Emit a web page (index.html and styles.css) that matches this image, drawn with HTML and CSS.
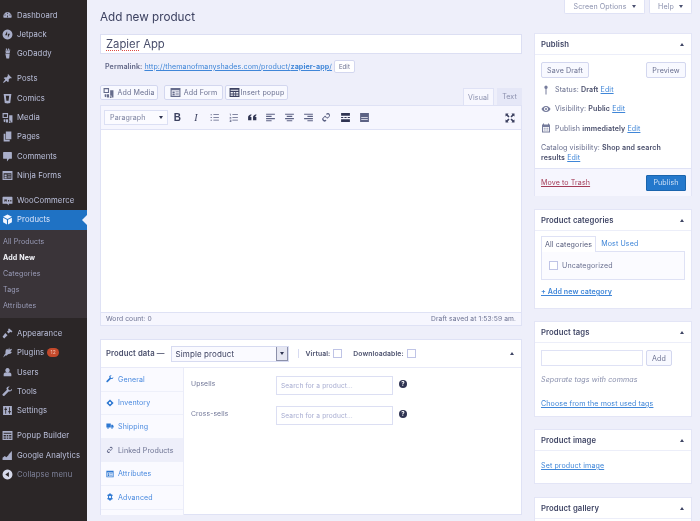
FILE: index.html
```html
<!DOCTYPE html>
<html lang="en">
<head>
<meta charset="utf-8">
<title>Add new product</title>
<link rel="stylesheet" href="styles.css">
</head>
<body>
<svg class="sprite" width="0" height="0">
  <defs>
    <symbol id="i-dash" viewBox="0 0 20 20"><path d="M3 14a7.500 7.500 0 1 1 14 0zM10 5a1 1 0 1 0 .01 0zM5.500 8a1 1 0 1 0 .01 0zM14.500 8a1 1 0 1 0 .01 0zM9 13l1-5 1 5z" fill-rule="evenodd"/></symbol>
    <symbol id="i-jet" viewBox="0 0 20 20"><path d="M10 1a9 9 0 1 0 .01 0zM9.300 4v7.500H5.500zM10.700 16V8.500h3.800z" fill-rule="evenodd"/></symbol>
    <symbol id="i-go" viewBox="0 0 20 20"><path d="M5 1l2 5h1L7 1h2l1 5 1-5h2l-1 5h1l1-4 1 1-1 6H7zM6 10h8l-1 9H8z"/></symbol>
    <symbol id="i-pin" viewBox="0 0 20 20"><path d="M11 2l7 7-2 1-1-1-3 3c1 2 0 4-1 5l-3-3-5 4-1-1 4-5-3-3c1-1 3-2 5-1l3-3-1-1z"/></symbol>
    <symbol id="i-comics" viewBox="0 0 20 20"><path d="M3 2h14l-2 16-5 1-5-1zM7 5l1 9h4l1-9z" fill-rule="evenodd"/></symbol>
    <symbol id="i-media" viewBox="0 0 20 20"><path d="M1 2h10v9H1zM3 4v5h6V4zM13 6h6v13h-3v-3h-3zM14 17a1.500 1.500 0 1 0 .01 0zM7 13h4v6H7zM3 13h3v4a1.500 1.500 0 0 1-3 0z" fill-rule="evenodd"/></symbol>
    <symbol id="i-pages" viewBox="0 0 20 20"><path d="M7 1h10v14H7zM3 5h3v11h8v3H3z"/></symbol>
    <symbol id="i-comment" viewBox="0 0 20 20"><path d="M3 2h14a1 1 0 0 1 1 1v10a1 1 0 0 1-1 1h-4l-4 5v-5H3a1 1 0 0 1-1-1V3a1 1 0 0 1 1-1z"/></symbol>
    <symbol id="i-form" viewBox="0 0 20 20"><path d="M1 2h18v16H1zM3 6v10h14V6zM4.500 8h4v3h-4zM4.500 12h4v3h-4zM10 8h6v1.500h-6zM10 12h6v1.500h-6z" fill-rule="evenodd"/></symbol>
    <symbol id="i-woo" viewBox="0 0 20 20"><path d="M2 3h16a1 1 0 0 1 1 1v11a1 1 0 0 1-1 1h-6l1 3-4-3H2a1 1 0 0 1-1-1V4a1 1 0 0 1 1-1zM4 8l1 5 2-3 1 3 1-5zM11 9v3h2V9zM15 9v3h2V9z" fill-rule="evenodd"/></symbol>
    <symbol id="i-box" viewBox="0 0 20 20"><path d="M10 1l8 4-8 4-8-4zM2 7l7 3.500V19l-7-4zM18 7v8l-7 4v-8.500z"/></symbol>
    <symbol id="i-brush" viewBox="0 0 20 20"><path d="M13 1l6 5-2 2-2-1-3 3-3-3 3-3-1-2zM6 9l4 4-6 6-3-3z"/></symbol>
    <symbol id="i-plug" viewBox="0 0 20 20"><path d="M13 1l1 4 3-2 1 2-3 3 3 1-2 3-5 1-3 3-1-1-5 4 3-6 2-2-1-1 1-5 3-2 1 3z"/></symbol>
    <symbol id="i-user" viewBox="0 0 20 20"><path d="M10 2a4 4 0 1 0 .01 0zM3 17v-4c0-2 2-3 4-3h6c2 0 4 1 4 3v4z"/></symbol>
    <symbol id="i-tool" viewBox="0 0 20 20"><path d="M18 5l-3 3-3-1-1-3 3-3c-3-1-6 1-6 4l1 2-8 8c-1 1 1 4 3 3l8-8c4 1 7-2 6-5z"/></symbol>
    <symbol id="i-set" viewBox="0 0 20 20"><path d="M2 2h16v16H2zM6 4v3H4.500v2H6v7h1.500V9H9V7H7.500V4zM13 4v7h-1.500v2H13v3h1.500v-3H16v-2h-1.500V4z" fill-rule="evenodd"/></symbol>
    <symbol id="i-popup" viewBox="0 0 20 20"><path d="M1 2h18v16H1zM3 5v2h14V5zM3 9v3h4V9zM8.500 9v3h3V9zM13 9v3h4V9zM3 13.500V16h4v-2.500zM8.500 13.500V16h3v-2.500zM13 13.500V16h4v-2.500z" fill-rule="evenodd"/></symbol>
    <symbol id="i-chart" viewBox="0 0 20 20"><path d="M1 18v-4l4-3 3 2 4-4 0-1 6-6v16z"/></symbol>
    <symbol id="i-collapse" viewBox="0 0 20 20"><path d="M10 1a9 9 0 1 0 .01 0zM12.500 5.500v9L6 10z" fill-rule="evenodd"/></symbol>
    <symbol id="i-link" viewBox="0 0 20 20"><path d="M12.500 2a4 4 0 0 0-3.500 2l2 1a2 2 0 1 1 3 3l-2 2-1-1-2 1 2 2 1 0 3-3a4 4 0 0 0-3-7zM7 7L4 10a4 4 0 1 0 6 5l-2-1a2 2 0 1 1-3-3l2-2 1 1 2-1-2-2z"/></symbol>
    <symbol id="i-eye" viewBox="0 0 20 20"><path d="M10 4C5 4 2 8 1 10c1 2 4 6 9 6s8-4 9-6c-1-2-4-6-9-6zM10 6a4 4 0 1 1-.01 0zM10 8a2 2 0 1 0 .01 0z" fill-rule="evenodd"/></symbol>
    <symbol id="i-cal" viewBox="0 0 20 20"><path d="M2 3h2V1h2v2h8V1h2v2h2v16H2zM4 8v9h12V8zM5.500 9.500h2v2h-2zM9 9.500h2v2H9zM12.500 9.500h2v2h-2zM5.500 13h2v2h-2zM9 13h2v2H9zM12.500 13h2v2h-2z" fill-rule="evenodd"/></symbol>
    <symbol id="i-status" viewBox="0 0 20 20"><path d="M10 1a3.500 3.500 0 0 1 1 6.800V19H9V7.800A3.500 3.500 0 0 1 10 1z"/></symbol>
    <symbol id="i-tag" viewBox="0 0 20 20"><path d="M10 1l9 9-9 9-9-9zM10 7a3 3 0 1 0 .01 0z" fill-rule="evenodd"/></symbol>
    <symbol id="i-truck" viewBox="0 0 20 20"><path d="M1 4h11v10H1zM13 7h4l2 3v4h-6z"/><circle cx="5" cy="15" r="2"/><circle cx="15" cy="15" r="2"/></symbol>
    <symbol id="i-gear" viewBox="0 0 20 20"><path d="M8 1h4l.5 3 2.500-1 2 3-2 2v4l2 2-2 3-2.500-1-.5 3H8l-.5-3L5 17l-2-3 2-2V8L3 6l2-3 2.500 1zM10 7a3 3 0 1 0 .01 0z" fill-rule="evenodd"/></symbol>
    <symbol id="i-bul" viewBox="0 0 20 20"><path d="M3 4h2v2H3zM8 4h10v1.500H8zM3 9h2v2H3zM8 9h10v1.500H8zM3 14h2v2H3zM8 14h10v1.500H8z"/></symbol>
    <symbol id="i-num" viewBox="0 0 20 20"><path d="M3 3h2v4H4V4H3zM3 9h3v1l-2 1h2v1H3v-1l2-1H3zM3 14h3v4H3v-1h2v-.500H4v-1h1V15H3zM8 4h10v1.500H8zM8 9h10v1.500H8zM8 14h10v1.500H8z"/></symbol>
    <symbol id="i-quote" viewBox="0 0 20 20"><path d="M8 4v2C6.500 7 6 8 6 9h2v6H2V9c0-2 2-4 6-5zM17 4v2c-1.500 1-2 2-2 3h2v6h-6V9c0-2 2-4 6-5z"/></symbol>
    <symbol id="i-al" viewBox="0 0 20 20"><path d="M2 3h16v2H2zM2 7h10v2H2zM2 11h16v2H2zM2 15h10v2H2z"/></symbol>
    <symbol id="i-ac" viewBox="0 0 20 20"><path d="M2 3h16v2H2zM5 7h10v2H5zM2 11h16v2H2zM5 15h10v2H5z"/></symbol>
    <symbol id="i-ar" viewBox="0 0 20 20"><path d="M2 3h16v2H2zM8 7h10v2H8zM2 11h16v2H2zM8 15h10v2H8z"/></symbol>
    <symbol id="i-more" viewBox="0 0 20 20"><path d="M2 2h16v5H2zM2 9h4v2H2zM8 9h4v2H8zM14 9h4v2h-4zM2 13h16v5H2z"/></symbol>
    <symbol id="i-kit" viewBox="0 0 20 20"><path d="M2 2h16v16H2zM4 9v1.500h12V9zM4 13v1.500h12V13z" fill-rule="evenodd"/></symbol>
    <symbol id="i-full" viewBox="0 0 20 20"><path d="M1 1h6L5.500 3 9 7 7 9 3 5.500 1 7zM19 1v6l-2-1.500L13 9l-2-2 3.500-4L13 1zM1 19v-6l2 1.500L7 11l2 2-3.500 4L7 19zM19 19h-6l1.500-2L11 13l2-2 4 3.500 2-1.500z"/></symbol>
  </defs>
</svg>

<nav class="sidebar">
  <ul class="menu">
    <li class="item"><svg class="mi"><use href="#i-dash"/></svg>Dashboard</li>
    <li class="item"><svg class="mi"><use href="#i-jet"/></svg>Jetpack</li>
    <li class="item"><svg class="mi"><use href="#i-go"/></svg>GoDaddy</li>
  </ul>
  <ul class="menu">
    <li class="item"><svg class="mi"><use href="#i-pin"/></svg>Posts</li>
    <li class="item"><svg class="mi"><use href="#i-comics"/></svg>Comics</li>
    <li class="item"><svg class="mi"><use href="#i-media"/></svg>Media</li>
    <li class="item"><svg class="mi"><use href="#i-pages"/></svg>Pages</li>
    <li class="item"><svg class="mi"><use href="#i-comment"/></svg>Comments</li>
    <li class="item"><svg class="mi"><use href="#i-form"/></svg>Ninja Forms</li>
  </ul>
  <ul class="menu">
    <li class="item"><svg class="mi"><use href="#i-woo"/></svg>WooCommerce</li>
    <li class="item item-current"><svg class="mi"><use href="#i-box"/></svg>Products<span class="notch"></span></li>
    <li class="submenu">
      <a class="sub">All Products</a>
      <a class="sub sub-on">Add New</a>
      <a class="sub">Categories</a>
      <a class="sub">Tags</a>
      <a class="sub">Attributes</a>
    </li>
  </ul>
  <ul class="menu menu-after-sub">
    <li class="item"><svg class="mi"><use href="#i-brush"/></svg>Appearance</li>
    <li class="item"><svg class="mi"><use href="#i-plug"/></svg>Plugins<span class="badge">12</span></li>
    <li class="item"><svg class="mi"><use href="#i-user"/></svg>Users</li>
    <li class="item"><svg class="mi"><use href="#i-tool"/></svg>Tools</li>
    <li class="item"><svg class="mi"><use href="#i-set"/></svg>Settings</li>
  </ul>
  <ul class="menu">
    <li class="item"><svg class="mi"><use href="#i-popup"/></svg>Popup Builder</li>
    <li class="item"><svg class="mi"><use href="#i-chart"/></svg>Google Analytics</li>
    <li class="item item-dim"><svg class="mi mi-bright"><use href="#i-collapse"/></svg>Collapse menu</li>
  </ul>
</nav>

<div class="content">
  <div class="screen-tabs">
    <span class="screen-tab tab-options">Screen Options<i class="caret"></i></span>
    <span class="screen-tab tab-help">Help<i class="caret"></i></span>
  </div>
  <div class="columns">
    <main class="col-main">
      <h1 class="page-title">Add new product</h1>
      <div class="title-input"><span class="squiggle">Zapier</span> App</div>
      <div class="permalink">
        <b class="perm-label">Permalink:</b>
        <a class="link">http://themanofmanyshades.com/product/<b>zapier-app</b>/</a>
        <span class="btn btn-xs">Edit</span>
      </div>
      <div class="editor-top">
        <span class="btn btn-media"><svg class="bi"><use href="#i-media"/></svg>Add Media</span>
        <span class="btn btn-form"><svg class="bi"><use href="#i-form"/></svg>Add Form</span>
        <span class="btn btn-popup"><svg class="bi bi-dark"><use href="#i-popup"/></svg>Insert popup</span>
        <span class="editor-tabs">
          <span class="etab etab-on">Visual</span>
          <span class="etab">Text</span>
        </span>
      </div>
      <section class="editor">
        <div class="toolbar">
          <span class="format">Paragraph<i class="caret caret-dark"></i></span>
          <b class="tb tb-b">B</b>
          <i class="tb tb-i">I</i>
          <svg class="ti"><use href="#i-bul"/></svg>
          <svg class="ti"><use href="#i-num"/></svg>
          <svg class="ti ti-dark"><use href="#i-quote"/></svg>
          <svg class="ti"><use href="#i-al"/></svg>
          <svg class="ti"><use href="#i-ac"/></svg>
          <svg class="ti"><use href="#i-ar"/></svg>
          <svg class="ti"><use href="#i-link"/></svg>
          <svg class="ti ti-dark"><use href="#i-more"/></svg>
          <svg class="ti"><use href="#i-kit"/></svg>
          <svg class="ti ti-full"><use href="#i-full"/></svg>
        </div>
        <div class="editor-body"></div>
        <div class="editor-foot">
          <span>Word count: 0</span>
          <span>Draft saved at 1:53:59 am.</span>
        </div>
      </section>
      <section class="pdata">
        <header class="pdata-head">
          <b class="pdata-title">Product data —</b>
          <span class="select">Simple product<span class="select-btn"><i class="caret caret-dark"></i></span></span>
          <span class="vsep"></span>
          <b class="check-label">Virtual:</b><span class="check"></span>
          <b class="check-label check-label-dl">Downloadable:</b><span class="check"></span>
          <i class="arrow arrow-end"></i>
        </header>
        <div class="pdata-body">
          <ul class="ptabs">
            <li class="ptab"><svg class="pi"><use href="#i-tool"/></svg>General</li>
            <li class="ptab"><svg class="pi"><use href="#i-tag"/></svg>Inventory</li>
            <li class="ptab"><svg class="pi"><use href="#i-truck"/></svg>Shipping</li>
            <li class="ptab ptab-on"><svg class="pi"><use href="#i-link"/></svg>Linked Products</li>
            <li class="ptab"><svg class="pi"><use href="#i-form"/></svg>Attributes</li>
            <li class="ptab"><svg class="pi"><use href="#i-gear"/></svg>Advanced</li>
          </ul>
          <div class="pfields">
            <div class="field">
              <span class="field-label">Upsells</span>
              <span class="search">Search for a product…</span>
              <span class="help">?</span>
            </div>
            <div class="field">
              <span class="field-label">Cross-sells</span>
              <span class="search">Search for a product…</span>
              <span class="help">?</span>
            </div>
          </div>
        </div>
      </section>
    </main>

    <aside class="col-side">
      <section class="box box-publish">
        <header class="box-head">Publish<i class="arrow"></i></header>
        <div class="publish-body">
          <div class="publish-btns">
            <span class="btn btn-save">Save Draft</span>
            <span class="btn btn-preview">Preview</span>
          </div>
          <div class="pub-row"><svg class="si"><use href="#i-status"/></svg><span>Status: <b>Draft</b> <a class="link">Edit</a></span></div>
          <div class="pub-row"><svg class="si"><use href="#i-eye"/></svg><span>Visibility: <b>Public</b> <a class="link">Edit</a></span></div>
          <div class="pub-row"><svg class="si"><use href="#i-cal"/></svg><span>Publish <b>immediately</b> <a class="link">Edit</a></span></div>
          <p class="pub-catalog">Catalog visibility: <b>Shop and search</b><br><b>results</b> <a class="link">Edit</a></p>
        </div>
        <footer class="publish-foot">
          <a class="trash">Move to Trash</a>
          <span class="btn-primary">Publish</span>
        </footer>
      </section>

      <section class="box box-cats">
        <header class="box-head">Product categories<i class="arrow"></i></header>
        <div class="cats-body">
          <div class="cat-tabs">
            <span class="cat-tab cat-tab-on">All categories</span>
            <a class="cat-tab link-plain">Most Used</a>
          </div>
          <div class="cat-list"><span class="check"></span>Uncategorized</div>
          <a class="link link-bold">+ Add new category</a>
        </div>
      </section>

      <section class="box box-tags">
        <header class="box-head">Product tags<i class="arrow"></i></header>
        <div class="tags-body">
          <div class="tag-row"><span class="tag-input"></span><span class="btn btn-add">Add</span></div>
          <p class="hint">Separate tags with commas</p>
          <a class="link">Choose from the most used tags</a>
        </div>
      </section>

      <section class="box box-image">
        <header class="box-head">Product image<i class="arrow"></i></header>
        <div class="image-body"><a class="link">Set product image</a></div>
      </section>

      <section class="box box-gallery">
        <header class="box-head">Product gallery<i class="arrow"></i></header>
      </section>
    </aside>
  </div>
</div>
</body>
</html>
```

FILE: styles.css
```css
* { box-sizing: border-box; }
html, body { margin: 0; height: 521px; overflow: hidden; }
body {
  display: flex;
  background: #eeeffa;
  color: #666c8c;
  font-family: Inter, "Liberation Sans", sans-serif;
  font-size: 7.100px;
  letter-spacing: 0.1px;
}
ul { list-style: none; margin: 0; padding: 0; }
p { margin: 0; }
.sprite { position: absolute; }
svg { fill: currentColor; display: block; flex: none; }

/* sidebar */
.sidebar {
  width: 87px;
  flex: none;
  background: #2b2627;
  padding-top: 5.500px;
  color: #bcc1dc;
  font-size: 7.700px;
  filter: blur(0.35px);
}
.menu { margin-bottom: 5.700px; }
.menu:has(.submenu) { margin-bottom: 5.500px; }
.item {
  display: flex;
  align-items: center;
  height: 19.350px;
  padding-left: 2px;
  white-space: nowrap;
  position: relative;
}
.mi { width: 11px; height: 11px; margin-right: 4px; color: #a9aec9; }
.mi-bright { color: #d6d9ea; }
.item-current { background: #1f72c4; color: #dfe6fa; }
.item-current .mi { color: #f4f7ff; }
.item-dim { color: #7d8098; }
.notch {
  position: absolute;
  right: 0;
  top: 5px;
  border: 5px solid transparent;
  border-right-color: #eeeffa;
  border-left-width: 0;
}
.submenu {
  display: flex;
  flex-direction: column;
  background: #3a3439;
  padding: 3.500px 0 5px 3px;
  color: #9a9cb8;
  font-size: 7.100px;
}
.sub { height: 16px; display: flex; align-items: center; }
.sub-on { color: #f3f4fa; font-weight: 700; }
.badge {
  margin-left: 3px;
  width: 12px;
  height: 9px;
  border-radius: 5px;
  background: #c4492b;
  color: #f2c4b4;
  font-size: 5px;
  line-height: 9px;
  text-align: center;
}

/* content */
.content { flex: 1; min-width: 0; padding: 0 8px 0 13px; filter: blur(0.35px); }
.screen-tabs { display: flex; justify-content: flex-end; gap: 4px; height: 14px; }
.screen-tab {
  display: flex;
  align-items: center;
  justify-content: center;
  background: #fff;
  border: 1px solid #dfe2f5;
  border-top: 0;
  border-radius: 0 0 2px 2px;
  color: #8a90ad;
}
.tab-options { width: 81px; }
.tab-help { width: 43px; }
.caret {
  display: inline-block;
  margin-left: 5px;
  border: 2.500px solid transparent;
  border-top: 3.500px solid #4a5070;
  border-bottom: 0;
}
.caret-dark { border-top-color: #2e3350; }
.columns { display: flex; gap: 12px; }
.col-main { width: 422px; flex: none; }
.col-side { width: 158px; flex: none; padding-top: 19px; }

.page-title {
  margin: 0 0 6px;
  height: 14px;
  line-height: 7px;
  font-size: 11.700px;
  font-weight: 400;
  color: #3c4160;
  letter-spacing: 0;
}
.title-input {
  height: 20px;
  background: #fff;
  border: 1px solid #dcdff3;
  padding-left: 5px;
  font-size: 11.300px;
  line-height: 18px;
  color: #4a4f6c;
  letter-spacing: 0;
}
.squiggle { text-decoration: underline dotted #dd4a44 1px; text-underline-offset: 2px; }
.permalink {
  display: flex;
  align-items: center;
  height: 24px;
  padding-left: 5px;
  white-space: nowrap;
}
.perm-label { color: #5f6585; margin-right: 2px; font-weight: 600; }
.link { color: #3f86d8; text-decoration: underline; }
.link b { font-weight: 700; }
.btn {
  display: inline-flex;
  align-items: center;
  justify-content: center;
  height: 15px;
  padding: 0 6px;
  background: #f8f9ff;
  border: 1px solid #d3d7ef;
  border-bottom-width: 1.500px;
  border-radius: 2px;
  color: #6a7090;
  white-space: nowrap;
}
.btn-xs { margin-left: 2px; height: 13px; width: 21px; padding: 0; font-size: 6px; background: #fff; }
.bi { width: 11px; height: 11px; margin-right: 3px; color: #666c8c; }
.bi-dark { color: #3b4060; margin-right: 1px; }
.editor-top { display: flex; align-items: flex-end; height: 27px; }
.btn-media { width: 58px; margin-bottom: 5px; padding: 0 3px; }
.btn-form { width: 59px; margin: 0 2px 5px 6px; padding: 0 3px; }
.btn-popup { width: 63px; margin-bottom: 5px; padding: 0 2px; }
.editor-tabs { margin-left: auto; display: flex; gap: 3px; }
.etab {
  display: flex;
  align-items: center;
  justify-content: center;
  width: 25px;
  height: 17px;
  background: #e5e7f7;
  color: #8b90ae;
}
.etab-on {
  width: 31px;
  background: #f7f7fe;
  border: 1px solid #dfe2f5;
  border-bottom: 0;
}
.editor { border: 1px solid #dfe2f5; }
.toolbar {
  display: flex;
  align-items: center;
  height: 24px;
  background: #f6f6fe;
  border-bottom: 1px solid #dfe2f5;
  padding-left: 3px;
  color: #5c6284;
}
.format {
  display: flex;
  align-items: center;
  justify-content: space-between;
  width: 64px;
  height: 15px;
  padding: 0 4px 0 5px;
  background: #fbfbff;
  border: 1px solid #dce0f4;
  color: #7a809e;
}
.tb {
  width: 18.700px;
  text-align: center;
  font-size: 10px;
  font-family: "Liberation Serif", serif;
  color: #3c4160;
}
.tb-b { font-family: "Liberation Sans", sans-serif; }
.ti { width: 11px; height: 11px; margin: 0 3.850px; }
.ti-dark { color: #2f3452; }
.ti-full { width: 10px; height: 10px; margin: 0 6px 0 auto; color: #3c4160; }
.editor-body { height: 182px; background: #fff; }
.editor-foot {
  display: flex;
  justify-content: space-between;
  align-items: center;
  height: 13px;
  padding: 0 5px;
  background: #f6f6fe;
  border-top: 1px solid #dfe2f5;
  font-size: 6.700px;
  color: #6a7090;
}
.pdata {
  margin-top: 13px;
  height: 176px;
  background: #fff;
  border: 1px solid #dfe2f5;
}
.pdata-head {
  display: flex;
  align-items: center;
  height: 28px;
  padding-left: 5px;
  border-bottom: 1px solid #e8eaf8;
  white-space: nowrap;
  color: #4a4f6c;
}
.pdata-title { font-size: 7.700px; margin-right: 6px; font-weight: 600; }
.select {
  display: flex;
  align-items: center;
  justify-content: space-between;
  width: 118px;
  height: 16px;
  padding-left: 4px;
  border: 1px solid #d7dbf1;
  background: #fafaff;
  color: #3c4160;
  font-size: 8px;
}
.select-btn {
  display: flex;
  align-items: center;
  justify-content: center;
  width: 12px;
  height: 100%;
  background: #e6e7f2;
  border-left: 1px solid #8c90aa;
  border-right: 1px solid #8c90aa;
  border-bottom: 1px solid #8c90aa;
}
.select-btn .caret { margin: 0; }
.vsep { width: 1px; height: 9px; margin: 0 7px 0 9px; background: #d7dbf1; }
.check-label { font-size: 6.800px; font-weight: 600; margin-right: 3px; }
.check-label-dl { margin-left: 11px; }
.check {
  display: inline-block;
  flex: none;
  width: 9px;
  height: 9px;
  border: 1px solid #bfc4e6;
  background: #fff;
}
.arrow {
  margin-left: auto;
  border: 2.500px solid transparent;
  border-bottom: 3.500px solid #3f4565;
  border-top: 0;
}
.arrow-end { margin-right: 7px; }
.pdata-body { display: flex; height: 147px; }
.ptabs { width: 83px; flex: none; background: #fafaff; border-right: 1px solid #eaecf9; }
.ptab {
  display: flex;
  align-items: center;
  height: 23.600px;
  padding-left: 5px;
  border-bottom: 1px solid #eef0fa;
  color: #4a8adf;
}
.ptab-on { background: #eeeffa; color: #6a7090; }
.pi { width: 8px; height: 8px; margin-right: 4px; color: #2d78d2; }
.ptab-on .pi { color: #5c6284; }
.pfields { padding: 8px 0 0 7px; }
.field { display: flex; align-items: flex-start; height: 30px; }
.field-label { width: 85px; padding-top: 3px; font-size: 6.800px; color: #6f7596; }
.search {
  display: flex;
  align-items: center;
  width: 117px;
  height: 19px;
  padding-left: 4px;
  border: 1px solid #dcdff3;
  color: #a6abd0;
  font-size: 6.600px;
}
.help {
  width: 8px;
  height: 8px;
  margin: 4px 0 0 6px;
  border-radius: 50%;
  background: #2f3452;
  color: #fff;
  font-size: 6px;
  line-height: 8px;
  text-align: center;
  font-weight: 700;
}

/* right column */
.box { background: #fff; border: 1px solid #e3e5f6; margin-bottom: 12px; }
.box-head {
  display: flex;
  align-items: center;
  height: 21px;
  padding: 0 7px 0 6px;
  border-bottom: 1px solid #eceef9;
  color: #3f4565;
  font-weight: 600;
  font-size: 7.700px;
}
.box-publish { height: 163px; margin-bottom: 13px; }
.publish-body { height: 113px; padding: 7px 5px 0 6px; }
.publish-btns { display: flex; justify-content: space-between; margin-bottom: 2px; }
.btn-save { width: 48px; height: 16px; padding: 0; }
.btn-preview { width: 40px; height: 16px; padding: 0; }
.pub-row { display: flex; align-items: center; height: 19.300px; white-space: nowrap; }
.pub-row b, .pub-catalog b { color: #4a4f6c; font-weight: 600; }
.si { width: 10px; height: 10px; margin-right: 4px; color: #767c9c; }
.pub-catalog { margin-top: 5px; line-height: 10.500px; }
.publish-foot {
  display: flex;
  align-items: center;
  justify-content: space-between;
  height: 28px;
  padding: 0 5px 0 6px;
  background: #f6f6fe;
  border-top: 1px solid #dfe2f5;
}
.trash { color: #a33b56; text-decoration: underline; }
.btn-primary {
  display: flex;
  align-items: center;
  justify-content: center;
  width: 40px;
  height: 16px;
  background: #2478cc;
  border: 1px solid #1a64ad;
  border-radius: 1px;
  color: #cfe0f6;
}
.box-cats { height: 100px; }
.cats-body { padding: 5px 6px; }
.cat-tabs { display: flex; height: 15px; }
.cat-tab { display: flex; align-items: center; padding: 0 3px; }
.cat-tab-on {
  background: #fff;
  border: 1px solid #dfe2f5;
  border-bottom: 0;
  color: #565c7c;
  margin-bottom: -1px;
  position: relative;
  z-index: 1;
}
.link-plain { color: #3f86d8; margin-left: 2px; }
.cat-list {
  display: flex;
  align-items: center;
  gap: 4px;
  height: 29px;
  padding-left: 7px;
  background: #fbfbff;
  border: 1px solid #dfe2f5;
  color: #6a7090;
  margin-bottom: 7px;
}
.link-bold { font-weight: 600; }
.box-tags { height: 96px; }
.tags-body { padding: 7px 6px; }
.tag-row { display: flex; gap: 3px; height: 16px; }
.tag-input { width: 102px; border: 1px solid #dfe2f5; }
.btn-add { width: 26px; height: 16px; padding: 0; }
.hint { margin: 9px 0 14px; font-style: italic; color: #8a90ad; line-height: 10px; }
.box-image { height: 55px; margin-bottom: 13px; }
.image-body { padding: 10px 6px; }
.box-gallery { height: 24px; margin-bottom: 0; border-bottom: 0; }
```
